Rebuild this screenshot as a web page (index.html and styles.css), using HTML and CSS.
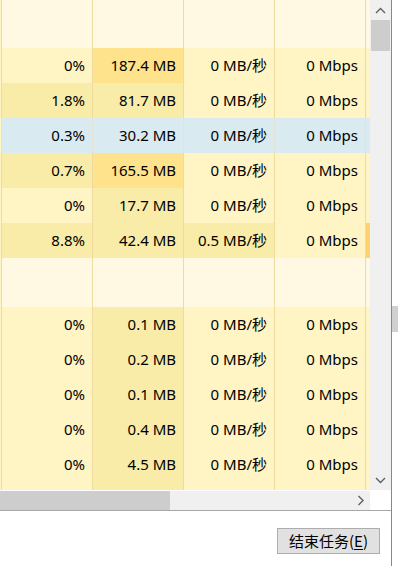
FILE: index.html
```html
<!DOCTYPE html>
<html lang="zh">
<head>
    <meta charset="UTF-8">
    <meta name="viewport" content="width=device-width, initial-scale=1.0">
    <title>任务管理器</title>
    <link rel="stylesheet" href="styles.css">
</head>
<body>
    <div class="window">
        <div class="pane">
            <div class="view">
                <div class="grid">
                    <div class="row group top">
                        <div class="cell"></div><div class="cell"></div><div class="cell"></div><div class="cell"></div><div class="cell tail"></div>
                    </div>
                    <div class="row">
                        <div class="cell">0%</div><div class="cell hot">187.4 MB</div><div class="cell">0 MB/秒</div><div class="cell">0 Mbps</div><div class="cell tail"></div>
                    </div>
                    <div class="row">
                        <div class="cell warm">1.8%</div><div class="cell warm">81.7 MB</div><div class="cell">0 MB/秒</div><div class="cell">0 Mbps</div><div class="cell tail"></div>
                    </div>
                    <div class="row selected">
                        <div class="cell">0.3%</div><div class="cell">30.2 MB</div><div class="cell">0 MB/秒</div><div class="cell">0 Mbps</div><div class="cell tail"></div>
                    </div>
                    <div class="row">
                        <div class="cell warm">0.7%</div><div class="cell hot">165.5 MB</div><div class="cell">0 MB/秒</div><div class="cell">0 Mbps</div><div class="cell tail"></div>
                    </div>
                    <div class="row">
                        <div class="cell">0%</div><div class="cell warm">17.7 MB</div><div class="cell">0 MB/秒</div><div class="cell">0 Mbps</div><div class="cell tail"></div>
                    </div>
                    <div class="row">
                        <div class="cell warm">8.8%</div><div class="cell warm">42.4 MB</div><div class="cell warm">0.5 MB/秒</div><div class="cell">0 Mbps</div><div class="cell tail orange"></div>
                    </div>
                    <div class="row group gap">
                        <div class="cell"></div><div class="cell"></div><div class="cell"></div><div class="cell"></div><div class="cell tail"></div>
                    </div>
                    <div class="row">
                        <div class="cell">0%</div><div class="cell warm">0.1 MB</div><div class="cell">0 MB/秒</div><div class="cell">0 Mbps</div><div class="cell tail"></div>
                    </div>
                    <div class="row">
                        <div class="cell">0%</div><div class="cell warm">0.2 MB</div><div class="cell">0 MB/秒</div><div class="cell">0 Mbps</div><div class="cell tail"></div>
                    </div>
                    <div class="row">
                        <div class="cell">0%</div><div class="cell warm">0.1 MB</div><div class="cell">0 MB/秒</div><div class="cell">0 Mbps</div><div class="cell tail"></div>
                    </div>
                    <div class="row">
                        <div class="cell">0%</div><div class="cell warm">0.4 MB</div><div class="cell">0 MB/秒</div><div class="cell">0 Mbps</div><div class="cell tail"></div>
                    </div>
                    <div class="row">
                        <div class="cell">0%</div><div class="cell warm">4.5 MB</div><div class="cell">0 MB/秒</div><div class="cell">0 Mbps</div><div class="cell tail"></div>
                    </div>
                    <!-- next row peeks in under the last one -->
                    <div class="row">
                        <div class="cell"></div><div class="cell warm"></div><div class="cell"></div><div class="cell"></div><div class="cell tail"></div>
                    </div>
                </div>
                <div class="vscroll">
                    <div class="arrow">
                        <svg width="11" height="7" viewBox="0 0 11 7"><path d="M1 6 L5.5 1.5 L10 6" fill="none" stroke="#606060" stroke-width="1.4"/></svg>
                    </div>
                    <div class="vthumb"></div>
                    <div class="track"></div>
                    <div class="arrow">
                        <svg width="11" height="7" viewBox="0 0 11 7"><path d="M1 1 L5.5 5.5 L10 1" fill="none" stroke="#606060" stroke-width="1.4"/></svg>
                    </div>
                </div>
            </div>
            <div class="hbar">
                <div class="hscroll">
                    <div class="hthumb"></div>
                    <div class="track"></div>
                    <div class="arrow">
                        <svg width="7" height="11" viewBox="0 0 7 11"><path d="M1.5 1 L6 5.5 L1.5 10" fill="none" stroke="#606060" stroke-width="1.4"/></svg>
                    </div>
                </div>
                <div class="corner"></div>
            </div>
            <div class="footer">
                <button class="end-task">结束任务(<u>E</u>)</button>
            </div>
        </div>
        <div class="edge"></div>
        <div class="strip"><div class="behind"></div></div>
    </div>
</body>
</html>
```

FILE: styles.css
```css
body {
    margin: 0;
    background-color: #fff;
    font-family: "Noto Sans", "Noto Sans CJK SC", sans-serif;
    font-size: 15px;
    color: #000;
}
.window {
    display: flex;
    width: 398px;
    height: 566px;
    overflow: hidden;
}
.pane {
    display: flex;
    flex-direction: column;
    width: 391px;
}
.view {
    display: flex;
    height: 490px;
}
.grid {
    width: 370px;
    overflow: hidden;
    background-color: #fff4c4;
}
.row {
    display: flex;
    height: 35px;
    padding-left: 1px;
}
.cell {
    box-sizing: border-box;
    width: 91px;
    flex: none;
    border-left: 1px solid #efdba0;
    background-color: #fff4c4;
    text-align: right;
    padding-right: 7px;
    line-height: 35px;
    white-space: nowrap;
}
.cell.tail {
    width: 5px;
    padding: 0;
}
.cell.warm { background-color: #f9eca8; }
.cell.hot { background-color: #ffe38c; }
.cell.orange { background-color: #ffd36b; }
.row.group .cell {
    background-color: #fff8e2;
}
.row.top { height: 48px; }
.row.gap { height: 49px; }
.row.selected .cell {
    background-color: #d9eaf0;
    border-left-color: #e4e2d0;
}
.vscroll {
    display: flex;
    flex-direction: column;
    width: 21px;
    background-color: #f0f0f0;
}
.arrow {
    display: flex;
    justify-content: center;
    align-items: center;
    height: 20px;
    flex: none;
}
.vthumb {
    height: 31px;
    margin: 0 1px;
    background-color: #cdcdcd;
}
.track { flex: 1; }
.hbar {
    display: flex;
    height: 20px;
}
.hscroll {
    display: flex;
    width: 370px;
    border-top: 1px solid #fff;
    background-color: #f0f0f0;
}
.hscroll .arrow {
    width: 20px;
    height: 19px;
}
.hthumb {
    width: 170px;
    background-color: #cdcdcd;
}
.corner {
    width: 21px;
    background-color: #fff;
}
.footer {
    flex: 1;
    display: flex;
    justify-content: flex-end;
    align-items: flex-start;
    border-top: 1px solid #a8a8a8;
    padding: 17px 11px 0 0;
}
.end-task {
    width: 103px;
    height: 26px;
    padding: 0;
    background-color: #e1e1e1;
    border: 1px solid #adadad;
    font-family: "Noto Sans CJK SC", sans-serif;
    font-size: 15px;
    color: #000;
    line-height: 22px;
}
.end-task u {
    text-underline-offset: 2px;
}
.edge {
    width: 1px;
    background-color: #888;
}
.strip {
    width: 6px;
    background-color: #fff;
}
.behind {
    margin-top: 306px;
    height: 26px;
    background-color: #d0d0d0;
}
```
